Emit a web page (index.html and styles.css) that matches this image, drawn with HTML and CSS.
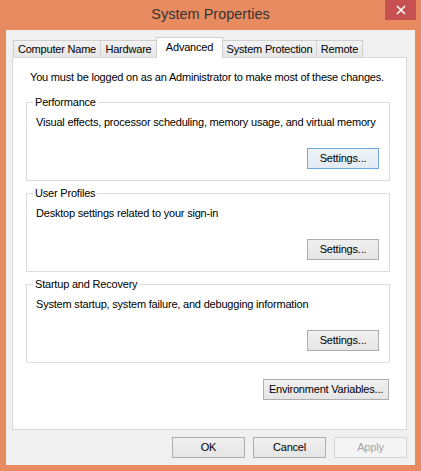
FILE: index.html
```html
<!DOCTYPE html>
<html lang="en">
<head>
<meta charset="UTF-8" />
<title>System Properties</title>
<link rel="stylesheet" href="styles.css">
</head>
<body>
<div class="window">
  <div class="titlebar">
    <span></span>
    <div class="title">System Properties</div>
    <button class="close" type="button" aria-label="Close">
      <svg width="10" height="10" viewBox="0 0 10 10">
        <path d="M1 1 L9 9 M9 1 L1 9" stroke="#fff" stroke-width="1.6" fill="none"/>
      </svg>
    </button>
  </div>
  <div class="client">
    <div class="tabs">
      <div class="tab tab-computer">Computer Name</div>
      <div class="tab tab-hardware">Hardware</div>
      <div class="tab tab-advanced active">Advanced</div>
      <div class="tab tab-protection">System Protection</div>
      <div class="tab tab-remote">Remote</div>
    </div>
    <div class="panel">
      <p class="notice">You must be logged on as an Administrator to make most of these changes.</p>

      <fieldset class="group">
        <legend>Performance</legend>
        <p class="desc">Visual effects, processor scheduling, memory usage, and virtual memory</p>
        <div class="group-actions">
          <button class="btn focused" type="button">Settings...</button>
        </div>
      </fieldset>

      <fieldset class="group">
        <legend>User Profiles</legend>
        <p class="desc">Desktop settings related to your sign-in</p>
        <div class="group-actions">
          <button class="btn" type="button">Settings...</button>
        </div>
      </fieldset>

      <fieldset class="group">
        <legend>Startup and Recovery</legend>
        <p class="desc">System startup, system failure, and debugging information</p>
        <div class="group-actions">
          <button class="btn" type="button">Settings...</button>
        </div>
      </fieldset>

      <div class="panel-actions">
        <button class="btn wide" type="button">Environment Variables...</button>
      </div>
    </div>
    <div class="dialog-actions">
      <button class="btn" type="button">OK</button>
      <button class="btn" type="button">Cancel</button>
      <button class="btn" type="button" disabled>Apply</button>
    </div>
  </div>
</div>
</body>
</html>
```

FILE: styles.css
```css
body {
  margin: 0;
  background-color: #e98b61;
  font-family: "Liberation Sans", Arial, sans-serif;
  font-size: 11px;
  letter-spacing: -0.2px;
  color: #000;
}
.window {
  width: 421px;
  height: 471px;
  display: flex;
  flex-direction: column;
}
.titlebar {
  height: 30px;
  flex: none;
  display: grid;
  grid-template-columns: 1fr auto 1fr;
}
.title {
  font-size: 14.5px;
  letter-spacing: 0;
  line-height: 28px;
  color: #333;
}
.close {
  justify-self: end;
  align-self: start;
  width: 31px;
  height: 20px;
  margin-right: 5px;
  padding: 0;
  border: none;
  background-color: #c75050;
  display: flex;
  align-items: center;
  justify-content: center;
}
.client {
  flex: 1;
  margin: 0 6px 6px;
  padding: 7px 8px 7px 6px;
  background-color: #f0f0f0;
  display: flex;
  flex-direction: column;
}

/* tabs */
.tabs {
  flex: none;
  height: 21px;
  margin-bottom: -1px;
  padding-left: 1px;
  display: flex;
  align-items: flex-end;
  z-index: 1;
}
.tab {
  box-sizing: border-box;
  height: 17px;
  margin-bottom: 1px;
  border: 1px solid #cfcfcf;
  border-bottom: none;
  background: linear-gradient(#f2f2f2, #e6e6e6);
  text-align: center;
  line-height: 16px;
  white-space: nowrap;
}
.tab + .tab {
  margin-left: -1px;
}
.tab.active {
  height: 21px;
  margin-bottom: 0;
  padding-top: 1px;
  background: #fff;
  z-index: 1;
}
.tab-computer { width: 88px; }
.tab-hardware { width: 57px; }
.tab-advanced { width: 67px; }
.tab-protection { width: 95px; }
.tab-remote { width: 47px; }

/* panel */
.panel {
  flex: 1;
  background: #fff;
  border: 1px solid #d9d9d9;
  padding: 12px 16px 0 13px;
  display: flex;
  flex-direction: column;
}
.notice {
  margin: 0 0 10px 4px;
  line-height: 15px;
}
.group {
  margin: 0 0 5px;
  min-width: 0;
  border: 1px solid #dcdcdc;
  padding: 5px 10px 11px 9px;
}
.group legend {
  padding: 0 2px;
  margin-left: -3px;
  line-height: 15px;
}
.desc {
  margin: 0;
  line-height: 15px;
}
.group-actions {
  margin-top: 18px;
  display: flex;
  justify-content: flex-end;
}
.panel-actions {
  margin-top: 11px;
  display: flex;
  justify-content: flex-end;
  padding-right: 1px;
}

/* buttons */
.btn {
  box-sizing: border-box;
  width: 73px;
  height: 21px;
  padding: 0;
  border: 1px solid #adadad;
  background: linear-gradient(#f0f0f0, #e5e5e5);
  font: inherit;
  letter-spacing: inherit;
  color: #000;
  line-height: 19px;
}
.group .btn {
  width: 72px;
}
.btn.focused {
  border-color: #6fa8e2;
  background: linear-gradient(#eef3f8, #e3ebf3);
}
.btn.wide {
  width: 126px;
}
.btn:disabled {
  border-color: #d5d5d5;
  background: #f4f4f4;
  color: #a3a3a3;
}
.dialog-actions {
  flex: none;
  margin-top: 7px;
  display: flex;
  justify-content: flex-end;
  gap: 8px;
}
```
